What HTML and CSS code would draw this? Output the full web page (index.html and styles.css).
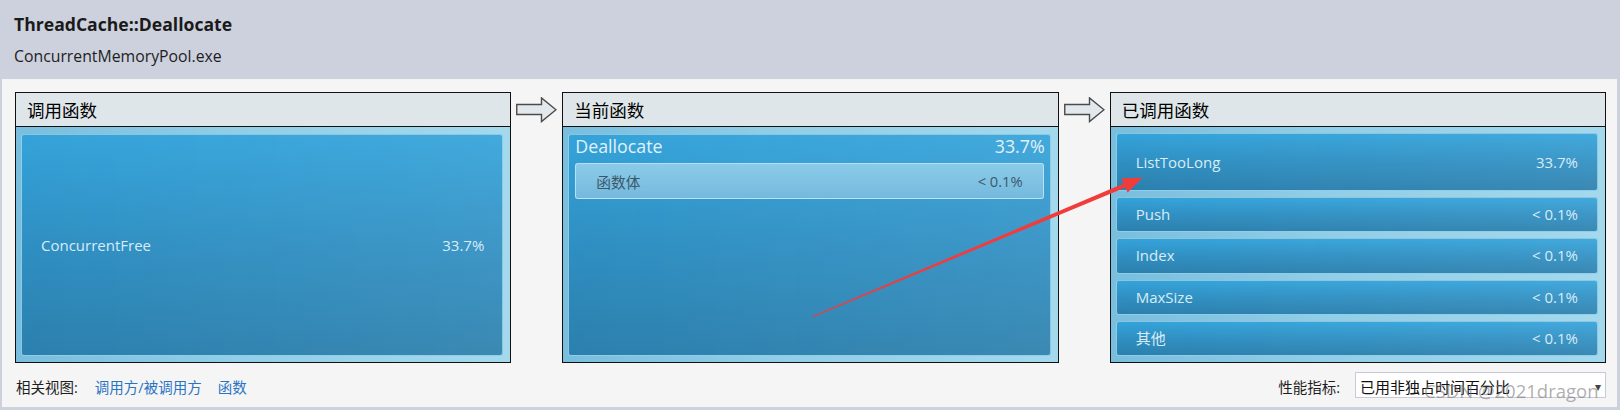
FILE: index.html
```html
<!DOCTYPE html>
<html lang="zh-CN">
<head>
<meta charset="utf-8">
<title>ThreadCache::Deallocate</title>
<link rel="stylesheet" href="styles.css">
</head>
<body>
<div class="window">
  <header class="titlebar">
    <h1 class="title">ThreadCache::Deallocate</h1>
    <div class="subtitle">ConcurrentMemoryPool.exe</div>
  </header>
  <main class="content">
    <div class="flow">
      <section class="panel">
        <div class="panel-head">调用函数</div>
        <div class="panel-body">
          <div class="card card-single"><span>ConcurrentFree</span><span>33.7%</span></div>
        </div>
      </section>
      <div class="arrow-cell">
        <svg class="flow-arrow" width="41" height="26" viewBox="0 0 41 26"><polygon points="0.75,7.5 25.5,7.5 25.5,0.9 40,12.75 25.5,24.6 25.5,17.5 0.75,17.5" fill="#e2e8eb" stroke="#4b4b4b" stroke-width="1.4" stroke-linejoin="miter"/></svg>
      </div>
      <section class="panel">
        <div class="panel-head">当前函数</div>
        <div class="panel-body">
          <div class="card card-current">
            <div class="current-head"><span>Deallocate</span><span>33.7%</span></div>
            <div class="subcard"><span>函数体</span><span>&lt; 0.1%</span></div>
          </div>
        </div>
      </section>
      <div class="arrow-cell">
        <svg class="flow-arrow" width="41" height="26" viewBox="0 0 41 26"><polygon points="0.75,7.5 25.5,7.5 25.5,0.9 40,12.75 25.5,24.6 25.5,17.5 0.75,17.5" fill="#e2e8eb" stroke="#4b4b4b" stroke-width="1.4" stroke-linejoin="miter"/></svg>
      </div>
      <section class="panel">
        <div class="panel-head">已调用函数</div>
        <div class="panel-body list">
          <div class="card item item-main"><span>ListTooLong</span><span>33.7%</span></div>
          <div class="card item"><span>Push</span><span>&lt; 0.1%</span></div>
          <div class="card item"><span>Index</span><span>&lt; 0.1%</span></div>
          <div class="card item"><span>MaxSize</span><span>&lt; 0.1%</span></div>
          <div class="card item"><span>其他</span><span>&lt; 0.1%</span></div>
        </div>
      </section>
    </div>
    <div class="bottombar">
      <div class="related">
        <span class="label">相关视图:</span>
        <a class="link" href="#">调用方/被调用方</a>
        <a class="link" href="#">函数</a>
      </div>
      <div class="metric">
        <span class="label">性能指标:</span>
        <div class="select"><span>已用非独占时间百分比</span><span class="caret">▾</span></div>
      </div>
    </div>
  </main>
  <div class="watermark">CSDN @2021dragon</div>
  <svg class="annotation" width="1620" height="410" viewBox="0 0 1620 410">
    <polygon points="812.1,316.2 1123.6,183.4 1121.4,178.3 1142.5,177.8 1127.6,192.6 1125.4,187.6 812.6,317.2" fill="#f13c3c"/>
  </svg>
</div>
</body>
</html>
```
FILE: styles.css
```css
html, body {
  margin: 0;
  padding: 0;
}
body {
  font-family: "Open Sans", "Noto Sans CJK SC", sans-serif;
  background: #cdd0dd;
  color: #1b1b1b;
}
.window {
  position: relative;
  width: 1620px;
  height: 410px;
  background: #cdd0dd;
  display: flex;
  flex-direction: column;
  overflow: hidden;
}
.titlebar {
  height: 79px;
  box-sizing: border-box;
  padding: 12px 14px 0 14px;
  flex: none;
}
.title {
  margin: 0;
  font-size: 17.6px;
  font-weight: 700;
  line-height: 24px;
  color: #1a1a1a;
}
.subtitle {
  margin-top: 10px;
  font-size: 15.8px;
  line-height: 21px;
  color: #1e1e1e;
}
.content {
  flex: 1;
  margin: 0 3px 3px 2px;
  background: #f5f5f5;
  padding: 13px 11px 0 13px;
  display: flex;
  flex-direction: column;
  min-height: 0;
}
.flow {
  display: grid;
  grid-template-columns: 1fr 51px 1fr 51px 1fr;
  height: 271px;
  flex: none;
}
.panel {
  border: 1px solid #111;
  display: flex;
  flex-direction: column;
  min-width: 0;
}
.panel-head {
  height: 33px;
  flex: none;
  border-bottom: 1px solid #111;
  background: #dfe6e9;
  padding-left: 11px;
  font-family: "Noto Sans CJK SC", sans-serif;
  font-size: 17.5px;
  line-height: 33px;
  color: #000;
}
.panel-body {
  flex: 1;
  min-height: 0;
  padding: 7px 7px 6px 5px;
  background: linear-gradient(to right, #79bedd 0%, #92cee7 45%, #a4d9ed 100%);
  display: flex;
  flex-direction: column;
}
.arrow-cell {
  display: flex;
  justify-content: center;
  padding-top: 5px;
}
.flow-arrow {
  display: block;
}
.card {
  background:
    linear-gradient(to right, rgba(255,255,255,0) 0%, rgba(255,255,255,0.07) 100%),
    linear-gradient(to bottom, #34a3da 0%, #2f8fc2 50%, #2b80ad 100%);
  border: 1px solid rgba(170, 220, 242, 0.75);
  border-radius: 3px;
  color: #d8ecf6;
  font-size: 15px;
}
.card-single {
  flex: 1;
  display: flex;
  align-items: center;
  justify-content: space-between;
  padding: 0 18px 0 19px;
}
.card-current {
  flex: 1;
  display: flex;
  flex-direction: column;
}
.current-head {
  display: flex;
  justify-content: space-between;
  padding: 0 5px 0 6px;
  font-size: 17.8px;
  line-height: 22px;
  color: #e2f1f9;
}
.subcard {
  margin: 6px 6px 0 6px;
  height: 36px;
  box-sizing: border-box;
  display: flex;
  align-items: center;
  justify-content: space-between;
  padding: 0 20px 0 20px;
  background: linear-gradient(to bottom, #8bcbe9 0%, #74b9dd 100%);
  border: 1px solid rgba(195, 230, 247, 0.85);
  border-radius: 3px;
  color: #3d5969;
  font-size: 14.7px;
}
.list {
  padding-top: 6px;
  gap: 6px;
}
.item {
  flex: 1;
  display: flex;
  align-items: center;
  justify-content: space-between;
  padding: 0 19px 1px 19px;
  min-height: 0;
}
.item-main {
  flex: none;
  height: 58px;
  box-sizing: border-box;
}
.bottombar {
  flex: 1;
  display: flex;
  align-items: center;
  justify-content: space-between;
  padding-left: 1px;
  font-size: 14.5px;
}
.related {
  display: flex;
  align-items: center;
  padding-top: 2px;
}
.label {
  color: #1e1e1e;
}
.link {
  color: #2a74c4;
  text-decoration: none;
  margin-left: 17px;
}
.link + .link {
  margin-left: 16px;
}
.metric {
  display: flex;
  align-items: center;
}
.metric .label {
  padding-top: 2px;
}
.select {
  margin-left: 15px;
  width: 251px;
  height: 26px;
  box-sizing: border-box;
  border: 1px solid #c9c9da;
  background: #fff;
  display: flex;
  align-items: center;
  justify-content: space-between;
  padding: 2px 4px 0 4px;
  font-size: 15px;
  color: #111;
}
.caret {
  font-size: 12px;
  color: #444;
}
.watermark {
  position: absolute;
  left: 1424px;
  top: 382px;
  font-family: "Open Sans", sans-serif;
  font-size: 18.5px;
  line-height: 18px;
  color: rgba(120, 120, 120, 0.6);
  white-space: nowrap;
  pointer-events: none;
}
.annotation {
  position: absolute;
  left: 0;
  top: 0;
  pointer-events: none;
}
```
